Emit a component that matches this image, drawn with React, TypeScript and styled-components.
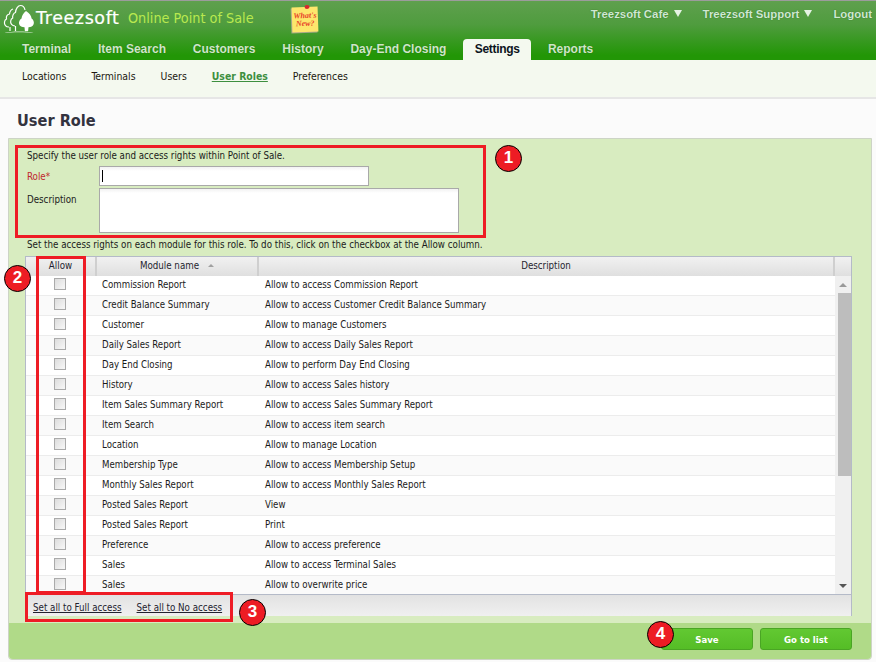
import React from "react";
import styled, { createGlobalStyle } from "styled-components";

const Global = createGlobalStyle`
  html, body { margin: 0; padding: 0; background: #fbfbfb; }
  body { font-family: "DejaVu Sans", "Liberation Sans", sans-serif; font-stretch: condensed; font-size: 9.7px; color: #1a1a1a; }
  * { box-sizing: border-box; }
`;

const Page = styled.div`
  position: relative;
  width: 876px;
  height: 662px;
  overflow: hidden;
  background: #fbfbfb;
`;

const Header = styled.header`
  height: 60px;
  border-top: 1px solid #9c9c9c;
  background: linear-gradient(#5fa04e 0%, #4f9c3e 40%, #229606 92%, #229606 100%);
  display: flex;
  flex-direction: column;
`;

const TopRow = styled.div`
  height: 38px;
  display: flex;
  align-items: flex-start;
  justify-content: space-between;
`;

const Brand = styled.div`
  display: flex;
  align-items: flex-start;
  padding: 1px 0 0 3px;
`;

const LogoMark = styled.svg`
  width: 33px;
  height: 32px;
  flex: none;
`;

const BrandName = styled.span`
  font-family: "DejaVu Sans", sans-serif;
  font-stretch: normal;
  font-size: 17.5px;
  color: #fff;
  line-height: 20px;
  margin: 6px 0 0 0;
  letter-spacing: 0.6px;
  width: 92px;
  -webkit-text-stroke: 0.2px #fff;
`;

const BrandTag = styled.span`
  font-size: 14.3px;
  color: #b9e94f;
  line-height: 20px;
  margin: 6px 0 0 0;
  width: 164px;
  white-space: nowrap;
`;

const Sticky = styled.div`
  position: relative;
  width: 26px;
  height: 25px;
  margin-top: 5px;
  background: #fde66c;
  box-shadow: -1px 1px 0 #a8a888;
  transform: rotate(-2deg);
  color: #e8432a;
  font-family: "Liberation Serif", serif;
  font-style: italic;
  font-weight: bold;
  font-size: 8px;
  line-height: 8px;
  text-align: center;
  padding-top: 5px;
  white-space: nowrap;
  &::before {
    content: "";
    position: absolute;
    top: -2px;
    left: 13px;
    width: 5px;
    height: 4px;
    border-radius: 50%;
    background: #d8262c;
  }
`;

const StickyLine = styled.div``;

const UserMenu = styled.nav`
  display: flex;
  align-items: center;
  padding: 3px 4px 0 0;
  height: 22px;
`;

const UserLink = styled.a<{ $gap: number }>`
  font-family: "Liberation Sans", sans-serif;
  font-stretch: normal;
  font-weight: bold;
  font-size: 11.4px;
  color: #cfe8d2;
  text-shadow: 0 0 1px rgba(20, 70, 10, 0.7);
  margin-left: ${(p) => p.$gap}px;
  display: flex;
  align-items: center;
  gap: 5px;
`;

const Caret = styled.span`
  width: 0;
  height: 0;
  border-left: 4.5px solid transparent;
  border-right: 4.5px solid transparent;
  border-top: 7px solid #e6f3e4;
`;

const Tabs = styled.nav`
  height: 21px;
  display: flex;
  padding-left: 9px;
  gap: 0.8px;
`;

const Tab = styled.a<{ $active?: boolean }>`
  font-family: "Liberation Sans", sans-serif;
  font-stretch: normal;
  font-weight: bold;
  font-size: 12px;
  line-height: 20px;
  padding: 0 ${(p) => (p.$active ? 11.5 : 13)}px;
  margin: 0 ${(p) => (p.$active ? 3 : 0)}px;
  letter-spacing: ${(p) => (p.$active ? "-0.3px" : "0")};
  border-radius: 4px 4px 0 0;
  color: ${(p) => (p.$active ? "#0c1420" : "#cfe6c8")};
  background: ${(p) => (p.$active ? "#f4f9ef" : "transparent")};
  text-shadow: ${(p) => (p.$active ? "none" : "0 0 1px rgba(20,70,10,0.6)")};
`;

const SubNav = styled.nav`
  height: 39px;
  background: #f4f9ef;
  border-bottom: 2px solid #e6e6e6;
  display: flex;
  align-items: flex-start;
  padding: 9px 0 0 22px;
  gap: 25px;
`;

const SubLink = styled.a<{ $active?: boolean }>`
  font-size: 10.4px;
  line-height: 14px;
  color: ${(p) => (p.$active ? "#3d8f3f" : "#20180f")};
  font-weight: ${(p) => (p.$active ? "bold" : "normal")};
  text-decoration: ${(p) => (p.$active ? "underline" : "none")};
`;

const TitleBar = styled.h1`
  margin: 0;
  height: 39px;
  padding: 12px 0 0 17px;
  font-size: 16.2px;
  line-height: 20px;
  font-weight: bold;
  color: #33333f;
`;

const Panel = styled.section`
  margin: 0 4px 0 8px;
  height: 522px;
  background: #d8ecc0;
  border: 1px solid #cdd4c6;
  border-radius: 0 0 4px 4px;
  display: flex;
  flex-direction: column;
`;

const PanelBody = styled.div`
  flex: 1;
  padding: 10px 19px 0 16px;
`;

const Note = styled.p<{ $top?: number }>`
  margin: ${(p) => p.$top ?? 0}px 0 0 2px;
  line-height: 14px;
  height: 14px;
  white-space: nowrap;
`;

const FormRow = styled.div<{ $top: number }>`
  display: flex;
  margin: ${(p) => p.$top}px 0 0 2px;
`;

const Label = styled.label<{ $required?: boolean; $pad: number }>`
  width: 72px;
  line-height: 14px;
  padding-top: ${(p) => p.$pad}px;
  color: ${(p) => (p.$required ? "#c0272d" : "#1a1a1a")};
`;

const TextInput = styled.div`
  width: 270px;
  height: 20px;
  background: linear-gradient(#f2f2f2, #fff 4px);
  border: 1px solid #a9a9a9;
  padding: 3px 0 0 2px;
  &::after {
    content: "";
    display: block;
    width: 1px;
    height: 12px;
    background: #000;
  }
`;

const TextArea = styled.div`
  width: 360px;
  height: 45px;
  background: linear-gradient(#f2f2f2, #fff 4px);
  border: 1px solid #a9a9a9;
`;

const Grid = styled.div`
  margin-top: 4px;
  height: 360px;
  border: 1px solid #b4bac8;
  border-bottom: 0;
  background: #fff;
  display: flex;
  flex-direction: column;
`;

const GridHead = styled.div`
  height: 19px;
  flex: none;
  display: flex;
  background: linear-gradient(#f1f1f1, #dfdfdf);
`;

const HeadCell = styled.div<{ $w?: number }>`
  ${(p) => (p.$w ? `width: ${p.$w}px; flex: none;` : "flex: 1;")}
  border-right: 2px solid #cfcfcf;
  line-height: 18px;
  text-align: center;
  color: #1f1f2f;
  &:last-child { border-right: 0; }
`;

const SortMark = styled.span`
  display: inline-block;
  width: 0;
  height: 0;
  margin: 0 0 2px 9px;
  border-left: 3.5px solid transparent;
  border-right: 3.5px solid transparent;
  border-bottom: 3.5px solid #a0a0a0;
`;

const GridMiddle = styled.div`
  height: 318px;
  flex: none;
  display: flex;
  overflow: hidden;
`;

const Rows = styled.div`
  flex: 1;
  font-size: 9.6px;
`;

const Row = styled.div<{ $alt: boolean }>`
  height: 20px;
  display: flex;
  align-items: center;
  padding-bottom: 2px;
  background: ${(p) => (p.$alt ? "#fafafa" : "#fff")};
  border-bottom: 1px solid #ececec;
`;

const CheckCell = styled.div`
  width: 70px;
  flex: none;
  display: flex;
  justify-content: center;
  padding-right: 2px;
`;

const Check = styled.input`
  appearance: none;
  margin: 0 0 2px 0;
  width: 12px;
  height: 12px;
  border: 1px solid #aaa;
  background: linear-gradient(135deg, #dcdcdc, #f8f8f8);
`;

const NameCell = styled.div`
  width: 163px;
  flex: none;
  padding-left: 6px;
  line-height: 16px;
  white-space: nowrap;
`;

const DescCell = styled.div`
  flex: 1;
  padding-left: 6px;
  line-height: 16px;
  white-space: nowrap;
`;

const ScrollBar = styled.div`
  width: 16px;
  flex: none;
  background: #f0f0f0;
  display: flex;
  flex-direction: column;
  align-items: flex-end;
`;

const ScrollBtn = styled.div<{ $down?: boolean }>`
  height: 17px;
  width: 100%;
  flex: none;
  display: flex;
  align-items: center;
  justify-content: center;
  &::after {
    content: "";
    width: 0;
    height: 0;
    border-left: 4px solid transparent;
    border-right: 4px solid transparent;
    ${(p) => (p.$down ? "border-top: 4px solid #555;" : "border-bottom: 4px solid #999;")}
  }
`;

const ScrollThumb = styled.div`
  width: 13px;
  height: 183px;
  flex: none;
  background: #bdbdbd;
`;

const ScrollSpace = styled.div`
  flex: 1;
`;

const GridFoot = styled.div`
  flex: 1;
  background: linear-gradient(#e2e2e2, #f0f0f0);
  border-top: 1px solid #b4bac8;
  display: flex;
  align-items: center;
  padding: 4px 0 0 7px;
  gap: 15px;
`;

const FootLink = styled.a`
  text-decoration: underline;
  color: #22222e;
`;

const PanelFooter = styled.footer`
  height: 36px;
  flex: none;
  background: #b0da88;
  border-radius: 0 0 4px 4px;
  display: flex;
  justify-content: flex-end;
  gap: 7px;
  padding: 5px 19px 0 0;
`;

const ActionButton = styled.button`
  width: 92px;
  height: 22px;
  padding: 0;
  background: linear-gradient(#62c832, #55bd26);
  border: 1px solid #4aa524;
  border-radius: 3px;
  color: #fff;
  font-family: "DejaVu Sans", sans-serif;
  font-stretch: condensed;
  font-weight: bold;
  font-size: 9.5px;
`;

const RedBox = styled.div<{ $l: number; $t: number; $w: number; $h: number }>`
  position: absolute;
  left: ${(p) => p.$l}px;
  top: ${(p) => p.$t}px;
  width: ${(p) => p.$w}px;
  height: ${(p) => p.$h}px;
  border: 3px solid #ee1c25;
`;

const Badge = styled.div<{ $l: number; $t: number }>`
  position: absolute;
  left: ${(p) => p.$l}px;
  top: ${(p) => p.$t}px;
  width: 27px;
  height: 27px;
  border-radius: 50%;
  background: #ed1c24;
  border: 1px solid #000;
  color: #fff;
  font-family: "Liberation Sans", sans-serif;
  font-stretch: normal;
  font-weight: bold;
  font-size: 17px;
  line-height: 24px;
  text-align: center;
`;

const data: [string, string][] = [
  ["Commission Report", "Allow to access Commission Report"],
  ["Credit Balance Summary", "Allow to access Customer Credit Balance Summary"],
  ["Customer", "Allow to manage Customers"],
  ["Daily Sales Report", "Allow to access Daily Sales Report"],
  ["Day End Closing", "Allow to perform Day End Closing"],
  ["History", "Allow to access Sales history"],
  ["Item Sales Summary Report", "Allow to access Sales Summary Report"],
  ["Item Search", "Allow to access item search"],
  ["Location", "Allow to manage Location"],
  ["Membership Type", "Allow to access Membership Setup"],
  ["Monthly Sales Report", "Allow to access Monthly Sales Report"],
  ["Posted Sales Report", "View"],
  ["Posted Sales Report", "Print"],
  ["Preference", "Allow to access preference"],
  ["Sales", "Allow to access Terminal Sales"],
  ["Sales", "Allow to overwrite price"],
];

const tabs = ["Terminal", "Item Search", "Customers", "History", "Day-End Closing", "Settings", "Reports"];
const subs = ["Locations", "Terminals", "Users", "User Roles", "Preferences"];

const Logo = () => (
  <LogoMark viewBox="0 0 33 32">
    <g fill="none" stroke="#fff" strokeWidth="1.2" strokeLinejoin="round">
      <path d="M6 25c-3 0-5-2-4.500-5 .2-1.500 1-2.500 2-3C3 14.500 4.500 12.500 6.500 12c.3-2.500 2-4.500 3.500-5" />
      <path d="M12 24c-3 0-4.800-2.500-4.300-5 .2-1.500 1-2.500 2-3-.5-2.500 1-5 2.800-5.500C12.700 7 15 3.500 17.500 3.500c2.500 0 4 2 4.500 4.500" />
      <path d="M7 25v4M12.500 24v5" />
    </g>
    <path d="M23 9c3.500 2 5.300 5 5.600 7.500 1.800 1 2.700 3.500 2.100 5.500-.7 2.300-2.800 3.300-5.200 3.300l-.4 4h-3.200l-.4-4c-2.500 0-4.800-1-5.400-3.300-.5-2 .5-4.500 2.400-5.500.4-3 2.200-5.700 4.500-7.500z" fill="#fff" />
    <path d="M1 31c8-2 22-2 30 0-8-1-22-1-30 0z" fill="#fff" opacity="0.85" />
  </LogoMark>
);

export default function App() {
  return (
    <Page>
      <Global />
      <Header>
        <TopRow>
          <Brand>
            <Logo />
            <BrandName>Treezsoft</BrandName>
            <BrandTag>Online Point of Sale</BrandTag>
            <Sticky>
              <StickyLine>What's</StickyLine>
              <StickyLine>New?</StickyLine>
            </Sticky>
          </Brand>
          <UserMenu>
            <UserLink $gap={0}>Treezsoft Cafe <Caret /></UserLink>
            <UserLink $gap={21}>Treezsoft Support <Caret /></UserLink>
            <UserLink $gap={21}>Logout</UserLink>
          </UserMenu>
        </TopRow>
        <Tabs>
          {tabs.map((t) => (
            <Tab key={t} $active={t === "Settings"}>{t}</Tab>
          ))}
        </Tabs>
      </Header>
      <SubNav>
        {subs.map((s) => (
          <SubLink key={s} $active={s === "User Roles"}>{s}</SubLink>
        ))}
      </SubNav>
      <TitleBar>User Role</TitleBar>
      <Panel>
        <PanelBody>
          <Note>Specify the user role and access rights within Point of Sale.</Note>
          <FormRow $top={3}>
            <Label $required $pad={4}>Role*</Label>
            <TextInput />
          </FormRow>
          <FormRow $top={2}>
            <Label $pad={5}>Description</Label>
            <TextArea />
          </FormRow>
          <Note $top={5}>
            Set the access rights on each module for this role. To do this, click on the checkbox at the Allow column.
          </Note>
          <Grid>
            <GridHead>
              <HeadCell $w={71}>Allow</HeadCell>
              <HeadCell $w={162}>Module name<SortMark /></HeadCell>
              <HeadCell>Description</HeadCell>
              <HeadCell $w={16} />
            </GridHead>
            <GridMiddle>
              <Rows>
                {data.map(([name, desc], i) => (
                  <Row key={i} $alt={i % 2 === 1}>
                    <CheckCell><Check type="checkbox" /></CheckCell>
                    <NameCell>{name}</NameCell>
                    <DescCell>{desc}</DescCell>
                  </Row>
                ))}
              </Rows>
              <ScrollBar>
                <ScrollBtn />
                <ScrollThumb />
                <ScrollSpace />
                <ScrollBtn $down />
              </ScrollBar>
            </GridMiddle>
            <GridFoot>
              <FootLink>Set all to Full access</FootLink>
              <FootLink>Set all to No access</FootLink>
            </GridFoot>
          </Grid>
        </PanelBody>
        <PanelFooter>
          <ActionButton>Save</ActionButton>
          <ActionButton>Go to list</ActionButton>
        </PanelFooter>
      </Panel>
      <RedBox $l={15} $t={145} $w={471} $h={93} />
      <RedBox $l={36} $t={256} $w={50} $h={338} />
      <RedBox $l={25} $t={592} $w={208} $h={30} />
      <Badge $l={495} $t={145}>1</Badge>
      <Badge $l={4} $t={265}>2</Badge>
      <Badge $l={239} $t={599}>3</Badge>
      <Badge $l={647} $t={621}>4</Badge>
    </Page>
  );
}
